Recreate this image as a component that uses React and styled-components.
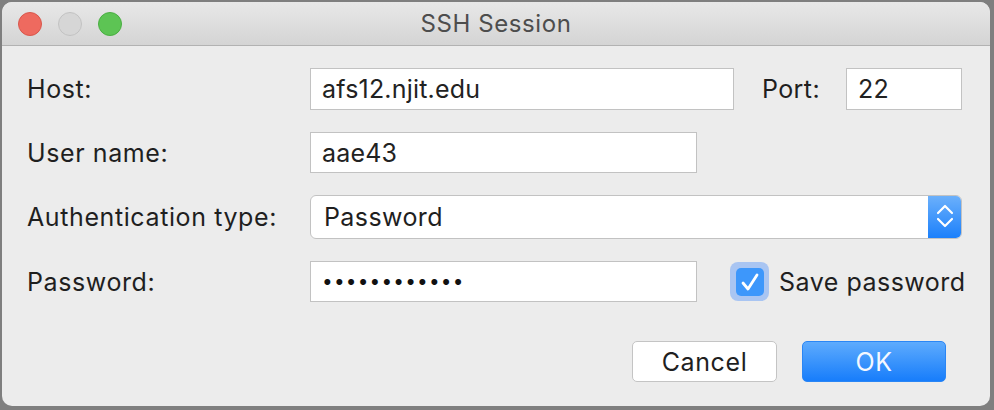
import React from "react";
import styled, { createGlobalStyle } from "styled-components";

const GlobalStyle = createGlobalStyle`
    html, body {
        margin: 0;
        padding: 0;
        background: #7f7f7f;
    }
    * {
        box-sizing: border-box;
    }
`;

const Window = styled.div`
    width: 988px;
    height: 404px;
    margin: 2px;
    border-radius: 10px;
    background: #ececec;
    overflow: hidden;
    display: flex;
    flex-direction: column;
    font-family: Inter, "Liberation Sans", sans-serif;
    color: #1f1f1f;
`;

const TitleBar = styled.div`
    height: 44px;
    flex: none;
    display: grid;
    grid-template-columns: 1fr auto 1fr;
    align-items: center;
    padding: 0 16px;
    background: linear-gradient(#e8e8e8, #d4d4d4);
    border-bottom: 1px solid #b2b2b2;
`;

const Lights = styled.div`
    display: flex;
    gap: 16px;
`;

const Light = styled.span`
    width: 24px;
    height: 24px;
    border-radius: 50%;
    background: ${(p) => p.color};
    border: 1px solid ${(p) => p.edge};
`;

const Title = styled.div`
    font-size: 24px;
    color: #4d4d4d;
    letter-spacing: 0.6px;
`;

const Body = styled.div`
    flex: 1;
    padding: 22px 28px 0 25px;
    display: flex;
    flex-direction: column;
`;

const Form = styled.div`
    display: grid;
    grid-template-columns: 283px minmax(0, 1fr);
    row-gap: 22px;
    align-items: center;
`;

const Label = styled.div`
    font-size: 25px;
    letter-spacing: 0.6px;
    white-space: nowrap;
`;

const Field = styled.div`
    display: flex;
    align-items: center;
    white-space: nowrap;
`;

const TextBox = styled.div`
    width: ${(p) => p.w}px;
    height: ${(p) => p.h || 42}px;
    flex: none;
    background: #fff;
    border: 1px solid #c2c2c2;
    padding-left: 11px;
    display: flex;
    align-items: center;
    font-size: 25px;
    letter-spacing: 0.2px;
    color: #222;
`;

const Dots = styled.span`
    font-size: 19px;
    letter-spacing: 1.2px;
    color: #111;
`;

const PortLabel = styled(Label)`
    margin: 0 26px 0 28px;
    letter-spacing: 0.4px;
`;

const Select = styled.div`
    flex: 1;
    height: 44px;
    display: flex;
    background: #fff;
    border: 1px solid #c2c2c2;
    border-radius: 6px;
    overflow: hidden;
    font-size: 25px;
    letter-spacing: 0.4px;
`;

const SelectValue = styled.div`
    flex: 1;
    display: flex;
    align-items: center;
    padding-left: 13px;
`;

const Stepper = styled.div`
    width: 34px;
    margin: -1px -1px -1px 0;
    background: linear-gradient(#6db1fb, #1a7ffb);
    display: flex;
    align-items: center;
    justify-content: center;
    padding-bottom: 3px;
`;

const CheckWrap = styled.label`
    display: flex;
    align-items: center;
    margin-left: 33px;
    gap: 10px;
    font-size: 25px;
    letter-spacing: 0.5px;
`;

const CheckRing = styled.span`
    width: 39px;
    height: 39px;
    flex: none;
    border-radius: 8px;
    background: #a9c5f2;
    display: flex;
    align-items: center;
    justify-content: center;
`;

const CheckBox = styled.span`
    width: 28px;
    height: 28px;
    border-radius: 5px;
    background: #3d97fb;
    display: flex;
    align-items: center;
    justify-content: center;
`;

const Buttons = styled.div`
    margin-top: 39px;
    display: flex;
    justify-content: flex-end;
    gap: 25px;
    padding-right: 16px;
`;

const Button = styled.div`
    width: ${(p) => p.w}px;
    height: 41px;
    border-radius: 5px;
    display: flex;
    align-items: center;
    justify-content: center;
    font-size: 25px;
    letter-spacing: 0.6px;
    background: ${(p) => (p.primary ? "linear-gradient(#5eabfd, #177dfb)" : "#fff")};
    color: ${(p) => (p.primary ? "#f4f8ff" : "#1f1f1f")};
    border: 1px solid ${(p) => (p.primary ? "#2a86f5" : "#c4c4c4")};
`;

const App = () => (
    <>
        <GlobalStyle />
        <Window>
            <TitleBar>
                <Lights>
                    <Light color="#ee6a5f" edge="#d8574c" />
                    <Light color="#d6d6d6" edge="#c2c2c2" />
                    <Light color="#5dc454" edge="#4aae42" />
                </Lights>
                <Title>SSH Session</Title>
                <div />
            </TitleBar>
            <Body>
                <Form>
                    <Label>Host:</Label>
                    <Field>
                        <TextBox w={424}>afs12.njit.edu</TextBox>
                        <PortLabel>Port:</PortLabel>
                        <TextBox w={116}>22</TextBox>
                    </Field>

                    <Label>User name:</Label>
                    <Field>
                        <TextBox w={387} h={41}>aae43</TextBox>
                    </Field>

                    <Label>Authentication type:</Label>
                    <Field>
                        <Select>
                            <SelectValue>Password</SelectValue>
                            <Stepper>
                                <svg width="18" height="26" viewBox="0 0 18 26" fill="none" stroke="#fff" strokeWidth="2.2" strokeLinecap="round" strokeLinejoin="round">
                                    <path d="M2 10 L9 3 L16 10" />
                                    <path d="M2 16 L9 23 L16 16" />
                                </svg>
                            </Stepper>
                        </Select>
                    </Field>

                    <Label>Password:</Label>
                    <Field>
                        <TextBox w={387} h={41}>
                            <Dots>••••••••••••</Dots>
                        </TextBox>
                        <CheckWrap>
                            <CheckRing>
                                <CheckBox>
                                    <svg width="20" height="20" viewBox="0 0 20 20" fill="none" stroke="#fff" strokeWidth="2.8" strokeLinecap="round" strokeLinejoin="round">
                                        <path d="M3 11 L8 17 L17 3" />
                                    </svg>
                                </CheckBox>
                            </CheckRing>
                            Save password
                        </CheckWrap>
                    </Field>
                </Form>
                <Buttons>
                    <Button w={145}>Cancel</Button>
                    <Button w={144} primary>OK</Button>
                </Buttons>
            </Body>
        </Window>
    </>
);

export default App;
